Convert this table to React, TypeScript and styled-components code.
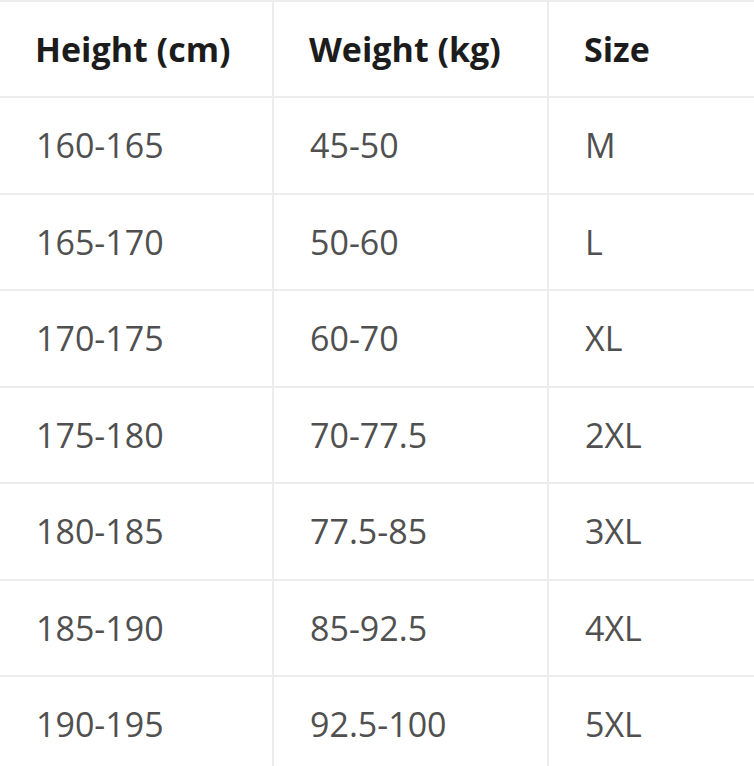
import React from "react";
import styled, { createGlobalStyle } from "styled-components";

const GlobalStyle = createGlobalStyle`
  html, body {
    margin: 0;
    padding: 0;
    background: #ffffff;
  }
  body {
    font-family: "Open Sans", "Noto Sans", sans-serif;
  }
`;

type Row = { height: string; weight: string; size: string };

const rows: Row[] = [
  { height: "160-165", weight: "45-50", size: "M" },
  { height: "165-170", weight: "50-60", size: "L" },
  { height: "170-175", weight: "60-70", size: "XL" },
  { height: "175-180", weight: "70-77.5", size: "2XL" },
  { height: "180-185", weight: "77.5-85", size: "3XL" },
  { height: "185-190", weight: "85-92.5", size: "4XL" },
  { height: "190-195", weight: "92.5-100", size: "5XL" },
];

const App = () => (
  <>
    <GlobalStyle />
    <Table>
      <colgroup>
        <col style={{ width: 273 }} />
        <col style={{ width: 275 }} />
        <col />
      </colgroup>
      <thead>
        <tr>
          <HeadCell>Height (cm)</HeadCell>
          <HeadCell>Weight (kg)</HeadCell>
          <HeadCell>Size</HeadCell>
        </tr>
      </thead>
      <tbody>
        {rows.map((r) => (
          <tr key={r.height}>
            <Cell>{r.height}</Cell>
            <Cell>{r.weight}</Cell>
            <Cell>{r.size}</Cell>
          </tr>
        ))}
      </tbody>
    </Table>
  </>
);

const Table = styled.table`
  width: 754px;
  border-collapse: collapse;
  table-layout: fixed;
  border-top: 2px solid #ededed;
`;

const BaseCell = styled.td`
  height: 94.5px;
  padding: 0 0 0 36px;
  border-bottom: 2px solid #ededed;
  border-right: 2px solid #ededed;
  text-align: left;
  vertical-align: middle;
  font-size: 34px;
  white-space: nowrap;

  &:last-child {
    border-right: none;
  }
`;

const HeadCell = styled(BaseCell).attrs({ as: "th" })`
  height: 94px;
  padding-left: 35px;
  font-weight: 700;
  color: #1c1c1c;
`;

const Cell = styled(BaseCell)`
  font-weight: 400;
  color: #505050;

  tr:last-child > & {
    border-bottom: none;
  }
`;

export default App;
